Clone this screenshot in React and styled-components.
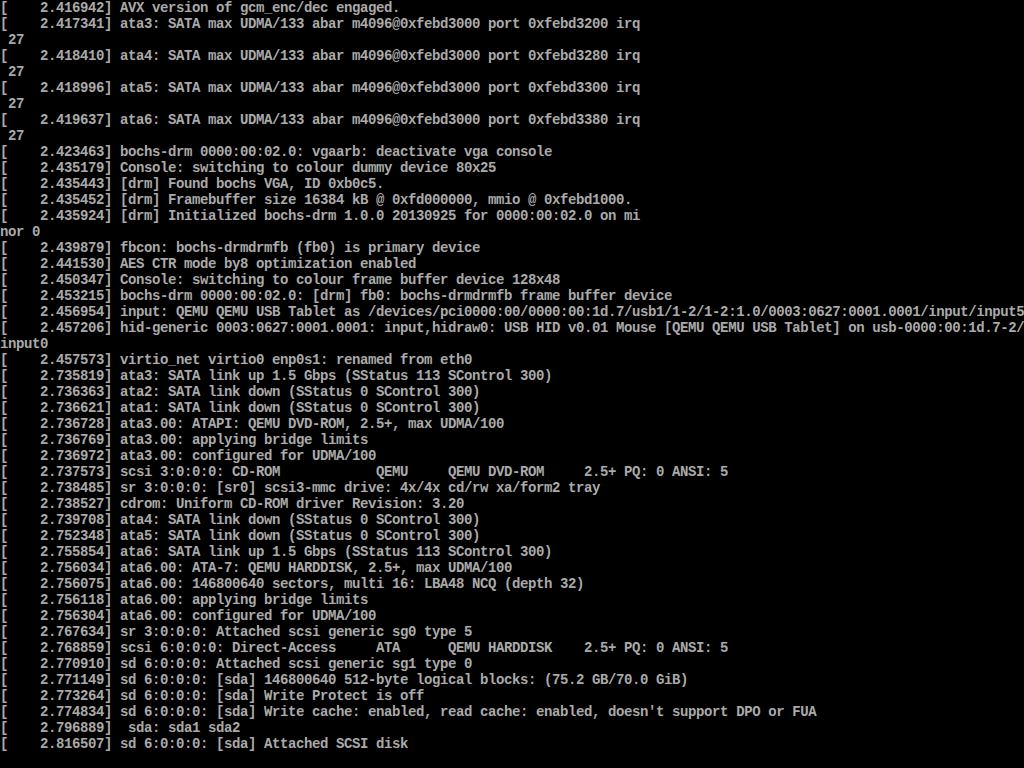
import React from "react";
import styled, { createGlobalStyle } from "styled-components";

const Global = createGlobalStyle`
  html, body {
    margin: 0;
    padding: 0;
    background: #000;
  }
  body {
    width: 1024px;
    height: 768px;
    overflow: hidden;
  }
`;

const Screen = styled.div`
  width: 1024px;
  height: 768px;
  background: #000;
  display: flex;
  flex-direction: column;
  overflow: hidden;
`;

const Line = styled.div`
  height: 16px;
  line-height: 16px;
  white-space: pre;
  color: #aaaaaa;
  font-family: "Liberation Mono", "DejaVu Sans Mono", monospace;
  font-size: 14px;
  font-weight: bold;
  letter-spacing: -0.4px;
  overflow: hidden;
`;

const lines = [
  "[    2.416942] AVX version of gcm_enc/dec engaged.",
  "[    2.417341] ata3: SATA max UDMA/133 abar m4096@0xfebd3000 port 0xfebd3200 irq",
  " 27",
  "[    2.418410] ata4: SATA max UDMA/133 abar m4096@0xfebd3000 port 0xfebd3280 irq",
  " 27",
  "[    2.418996] ata5: SATA max UDMA/133 abar m4096@0xfebd3000 port 0xfebd3300 irq",
  " 27",
  "[    2.419637] ata6: SATA max UDMA/133 abar m4096@0xfebd3000 port 0xfebd3380 irq",
  " 27",
  "[    2.423463] bochs-drm 0000:00:02.0: vgaarb: deactivate vga console",
  "[    2.435179] Console: switching to colour dummy device 80x25",
  "[    2.435443] [drm] Found bochs VGA, ID 0xb0c5.",
  "[    2.435452] [drm] Framebuffer size 16384 kB @ 0xfd000000, mmio @ 0xfebd1000.",
  "[    2.435924] [drm] Initialized bochs-drm 1.0.0 20130925 for 0000:00:02.0 on mi",
  "nor 0",
  "[    2.439879] fbcon: bochs-drmdrmfb (fb0) is primary device",
  "[    2.441530] AES CTR mode by8 optimization enabled",
  "[    2.450347] Console: switching to colour frame buffer device 128x48",
  "[    2.453215] bochs-drm 0000:00:02.0: [drm] fb0: bochs-drmdrmfb frame buffer device",
  "[    2.456954] input: QEMU QEMU USB Tablet as /devices/pci0000:00/0000:00:1d.7/usb1/1-2/1-2:1.0/0003:0627:0001.0001/input/input5",
  "[    2.457206] hid-generic 0003:0627:0001.0001: input,hidraw0: USB HID v0.01 Mouse [QEMU QEMU USB Tablet] on usb-0000:00:1d.7-2/",
  "input0",
  "[    2.457573] virtio_net virtio0 enp0s1: renamed from eth0",
  "[    2.735819] ata3: SATA link up 1.5 Gbps (SStatus 113 SControl 300)",
  "[    2.736363] ata2: SATA link down (SStatus 0 SControl 300)",
  "[    2.736621] ata1: SATA link down (SStatus 0 SControl 300)",
  "[    2.736728] ata3.00: ATAPI: QEMU DVD-ROM, 2.5+, max UDMA/100",
  "[    2.736769] ata3.00: applying bridge limits",
  "[    2.736972] ata3.00: configured for UDMA/100",
  "[    2.737573] scsi 3:0:0:0: CD-ROM            QEMU     QEMU DVD-ROM     2.5+ PQ: 0 ANSI: 5",
  "[    2.738485] sr 3:0:0:0: [sr0] scsi3-mmc drive: 4x/4x cd/rw xa/form2 tray",
  "[    2.738527] cdrom: Uniform CD-ROM driver Revision: 3.20",
  "[    2.739708] ata4: SATA link down (SStatus 0 SControl 300)",
  "[    2.752348] ata5: SATA link down (SStatus 0 SControl 300)",
  "[    2.755854] ata6: SATA link up 1.5 Gbps (SStatus 113 SControl 300)",
  "[    2.756034] ata6.00: ATA-7: QEMU HARDDISK, 2.5+, max UDMA/100",
  "[    2.756075] ata6.00: 146800640 sectors, multi 16: LBA48 NCQ (depth 32)",
  "[    2.756118] ata6.00: applying bridge limits",
  "[    2.756304] ata6.00: configured for UDMA/100",
  "[    2.767634] sr 3:0:0:0: Attached scsi generic sg0 type 5",
  "[    2.768859] scsi 6:0:0:0: Direct-Access     ATA      QEMU HARDDISK    2.5+ PQ: 0 ANSI: 5",
  "[    2.770910] sd 6:0:0:0: Attached scsi generic sg1 type 0",
  "[    2.771149] sd 6:0:0:0: [sda] 146800640 512-byte logical blocks: (75.2 GB/70.0 GiB)",
  "[    2.773264] sd 6:0:0:0: [sda] Write Protect is off",
  "[    2.774834] sd 6:0:0:0: [sda] Write cache: enabled, read cache: enabled, doesn't support DPO or FUA",
  "[    2.796889]  sda: sda1 sda2",
  "[    2.816507] sd 6:0:0:0: [sda] Attached SCSI disk",
];

export default function App() {
  return (
    <>
      <Global />
      <Screen>
        {lines.map((l, i) => (
          <Line key={i}>{l}</Line>
        ))}
      </Screen>
    </>
  );
}
